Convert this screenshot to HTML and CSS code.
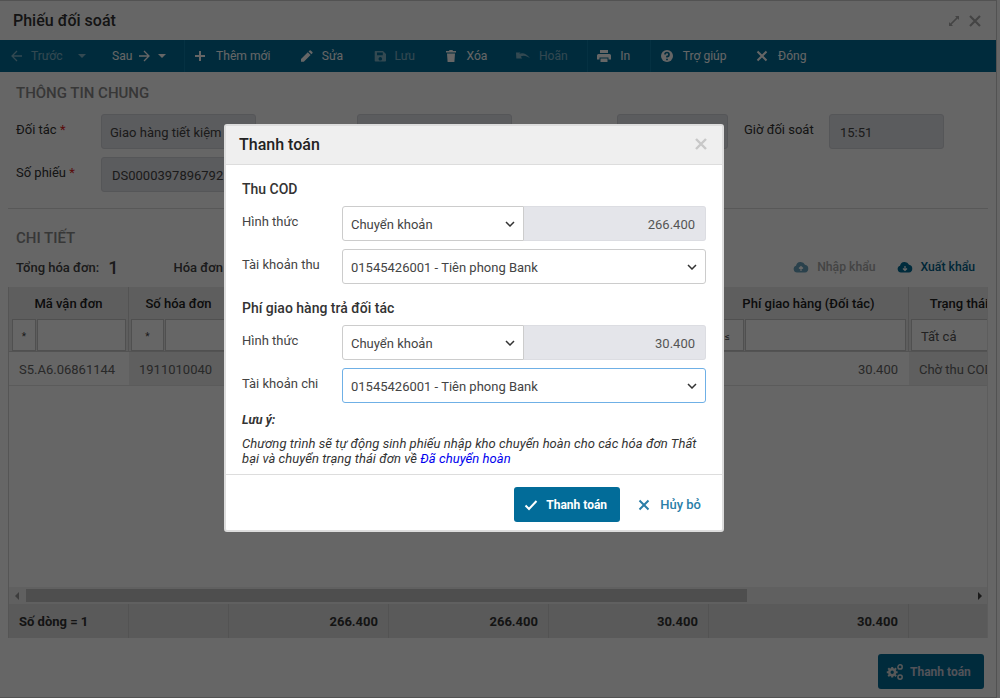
FILE: index.html
```html
<!DOCTYPE html>
<html lang="vi">
<head>
<meta charset="utf-8">
<title>Phiếu đối soát</title>
<link rel="stylesheet" href="styles.css">
</head>
<body>
<div class="app">
  <header class="titlebar">
    <h1>Phiếu đối soát</h1>
    <div class="win-actions">
      <svg class="win-icon" viewBox="0 0 12 12"><path d="M7 1h4v4L9.600 3.600 3.600 9.600 5 11H1V7l1.400 1.400 6-6z"/></svg>
      <svg class="win-icon" viewBox="0 0 12 12"><path class="x-stroke" d="M1 1l10 10M11 1L1 11"/></svg>
    </div>
  </header>

  <nav class="toolbar">
    <div class="tool-nav">
      <span class="nav-prev dim">
        <svg class="ic" viewBox="0 0 14 14"><path class="st" d="M12 7H2.500M7 2L2 7l5 5"/></svg>
        <span class="nav-text">Trước</span>
        <i class="caret"></i>
      </span>
      <span class="nav-next">
        <span>Sau</span>
        <svg class="ic" viewBox="0 0 14 14"><path class="st" d="M2 7h9.500M7 2l5 5-5 5"/></svg>
        <i class="caret"></i>
      </span>
    </div>
    <span class="tool first"><svg class="ic" viewBox="0 0 14 14"><path class="st st2" d="M7 2v10M2 7h10"/></svg>Thêm mới</span>
    <span class="tool"><svg class="ic" viewBox="0 0 14 14"><path class="fl" d="M2 10l6.800-6.800 2.800 2.800L4.800 12.800H2zM9.600 2.400l1-1a.8.8 0 0 1 1.100 0l1.700 1.700a.8.8 0 0 1 0 1.100l-1 1z"/></svg>Sửa</span>
    <span class="tool dim"><svg class="ic" viewBox="0 0 14 14"><path class="fl" d="M3.500 2h7.500L14 5v6.800a.8.8 0 0 1-.8.8H3.500a.8.8 0 0 1-.8-.8V2.800a.8.8 0 0 1 .8-.8zM5 3.500v2.800h5.800V3.500zM8.300 8a1.800 1.800 0 1 0 .01 0z" fill-rule="evenodd"/></svg>Lưu</span>
    <span class="tool"><svg class="ic" viewBox="0 0 14 14"><path class="fl" d="M5.500 1h3l.5 1h3v1.500H2V2h3zM3 4.500h8L10.400 13H3.600z"/></svg>Xóa</span>
    <span class="tool dim sep-after"><svg class="ic" viewBox="0 0 14 14"><path class="fl" d="M0 3.500l4.500 0-1.400 1.500c3-1.600 7.400-.8 10.900 4.200-3.300-2.600-6.800-3.200-9.300-1.600L6.200 9.500H0.300z"/></svg>Hoãn</span>
    <span class="tool sep-after"><svg class="ic" viewBox="0 0 14 14"><path class="fl" d="M3 1h8v3H3zM1.500 5h11A1.500 1.500 0 0 1 14 6.500V10.500h-2.500V8.500h-9v2H0V6.500A1.500 1.500 0 0 1 1.500 5zM3.500 9.500h7V13h-7z"/></svg>In</span>
    <span class="tool"><svg class="ic" viewBox="0 0 14 14"><circle class="fl" cx="7" cy="7" r="6"/><path class="q" d="M5 5.500A2 2 0 1 1 7 7.500V8.500M7 9.800v1.400"/></svg>Trợ giúp</span>
    <span class="tool"><svg class="ic" viewBox="0 0 14 14"><path class="st st2" d="M2.500 2.500l9 9M11.500 2.500l-9 9"/></svg>Đóng</span>
  </nav>

  <main class="content">
    <h2 class="section">THÔNG TIN CHUNG</h2>
    <div class="form-row">
      <label class="lbl">Đối tác <b class="req">*</b></label>
      <div class="field w-partner">Giao hàng tiết kiệm</div>
      <div class="field w-mid"></div>
      <label class="lbl lbl-date">Ngày</label>
      <div class="field w-date"></div>
      <label class="lbl lbl-time">Giờ đối soát</label>
      <div class="field w-time">15:51</div>
    </div>
    <div class="form-row">
      <label class="lbl">Số phiếu <b class="req">*</b></label>
      <div class="field w-code">DS0000397896792</div>
    </div>
    <hr class="divider">

    <h2 class="section">CHI TIẾT</h2>
    <div class="summary">
      <span class="sum-label">Tổng hóa đơn:</span>
      <span class="sum-num">1</span>
      <span class="sum-label sum-second">Hóa đơn</span>
      <span class="sum-actions">
        <span class="act act-dim"><svg class="cloud" viewBox="0 0 16 12"><path class="cl" d="M4 11.500A3.500 3.500 0 0 1 3 4.700 4.800 4.800 0 0 1 12 3.800a3.900 3.900 0 0 1 0 7.700z"/><path class="ar" d="M8 10V6M6 7.500L8 5.500l2 2"/></svg>Nhập khẩu</span>
        <span class="act"><svg class="cloud" viewBox="0 0 16 12"><path class="cl" d="M4 11.500A3.500 3.500 0 0 1 3 4.700 4.800 4.800 0 0 1 12 3.800a3.900 3.900 0 0 1 0 7.700z"/><path class="ar" d="M8 5v4M6 7.500l2 2 2-2"/></svg>Xuất khẩu</span>
      </span>
    </div>

    <div class="grid">
      <div class="row head">
        <div class="cell">Mã vận đơn</div>
        <div class="cell">Số hóa đơn</div>
        <div class="cell"></div>
        <div class="cell"></div>
        <div class="cell"></div>
        <div class="cell">Phí giao hàng (Đối tác)</div>
        <div class="cell">Trạng thái</div>
      </div>
      <div class="row filter">
        <div class="cell"><span class="op op-a">*</span><span class="inp"></span></div>
        <div class="cell"><span class="op">*</span><span class="inp"></span></div>
        <div class="cell"></div>
        <div class="cell"></div>
        <div class="cell"></div>
        <div class="cell"><span class="op">≤</span><span class="inp"></span></div>
        <div class="cell"><span class="inp inp-text">Tất cả</span></div>
      </div>
      <div class="row data">
        <div class="cell">S5.A6.06861144</div>
        <div class="cell shade">1911010040</div>
        <div class="cell"></div>
        <div class="cell"></div>
        <div class="cell"></div>
        <div class="cell num">30.400</div>
        <div class="cell shade">Chờ thu COD</div>
      </div>
      <div class="grid-empty"></div>
      <div class="scrollbar">
        <i class="arrow-l"></i>
        <div class="thumb"></div>
        <i class="arrow-r"></i>
      </div>
      <div class="row foot">
        <div class="cell">Số dòng = 1</div>
        <div class="cell"></div>
        <div class="cell num">266.400</div>
        <div class="cell num">266.400</div>
        <div class="cell num">30.400</div>
        <div class="cell num">30.400</div>
        <div class="cell"></div>
      </div>
    </div>

    <div class="page-actions">
      <span class="btn-pay-bg">
        <svg class="cogs" viewBox="0 0 16 16"><path class="cog" d="M5.500 3.600v1.800M5.500 11v1.800M2.500 8.200H.7M10.300 8.200H8.500M3.200 5.900L2 4.700M9 11.700l-1.200-1.200M3.200 10.500L2 11.700M9 4.700L7.800 5.900"/><circle class="cog-r" cx="5.500" cy="8.200" r="2.600"/><circle class="cog-t" cx="12.500" cy="3.500" r="1.900"/><circle class="cog-t" cx="12.500" cy="12.500" r="1.900"/></svg>
        Thanh toán
      </span>
    </div>
  </main>
</div>

<div class="overlay">
  <section class="modal">
    <header class="modal-head">
      <h3>Thanh toán</h3>
      <svg class="modal-x" viewBox="0 0 12 12"><path d="M1 1l10 10M11 1L1 11"/></svg>
    </header>
    <div class="modal-body">
      <h4 class="m-title">Thu COD</h4>
      <div class="m-row">
        <span class="m-label">Hình thức</span>
        <div class="m-control">
          <div class="sel sel-half">Chuyển khoản<svg class="chev" viewBox="0 0 10 6"><path d="M1 1l4 4 4-4"/></svg></div>
          <div class="addon">266.400</div>
        </div>
      </div>
      <div class="m-row">
        <span class="m-label">Tài khoản thu</span>
        <div class="m-control">
          <div class="sel">01545426001 - Tiên phong Bank<svg class="chev" viewBox="0 0 10 6"><path d="M1 1l4 4 4-4"/></svg></div>
        </div>
      </div>
      <h4 class="m-title m-title-2">Phí giao hàng trả đối tác</h4>
      <div class="m-row">
        <span class="m-label">Hình thức</span>
        <div class="m-control">
          <div class="sel sel-half">Chuyển khoản<svg class="chev" viewBox="0 0 10 6"><path d="M1 1l4 4 4-4"/></svg></div>
          <div class="addon">30.400</div>
        </div>
      </div>
      <div class="m-row">
        <span class="m-label">Tài khoản chi</span>
        <div class="m-control">
          <div class="sel sel-focus">01545426001 - Tiên phong Bank<svg class="chev" viewBox="0 0 10 6"><path d="M1 1l4 4 4-4"/></svg></div>
        </div>
      </div>
      <p class="note-title">Lưu ý:</p>
      <p class="note">Chương trình sẽ tự động sinh phiếu nhập kho chuyển hoàn cho các hóa đơn Thất bại và chuyển trạng thái đơn về <span class="note-link">Đã chuyển hoàn</span></p>
    </div>
    <footer class="modal-foot">
      <button class="btn-primary" type="button"><svg class="btn-ic" viewBox="0 0 14 12"><path d="M1.500 6.500l3.500 3.500 7.500-8"/></svg>Thanh toán</button>
      <button class="btn-link" type="button"><svg class="btn-ic" viewBox="0 0 12 12"><path d="M1.500 1.500l9 9M10.500 1.500l-9 9"/></svg>Hủy bỏ</button>
    </footer>
  </section>
</div>
</body>
</html>
```

FILE: styles.css
```css
* { box-sizing: border-box; }
html, body { margin: 0; height: 100%; overflow: hidden; background: #fff; }
body { font-family: Roboto, "Noto Sans", sans-serif; font-size: 13px; color: #333; }

.app { width: 997px; height: 698px; border-top: 1px solid #ccc; border-right: 1px solid #ccc; border-bottom: 1px solid #ccc; overflow: hidden; background: #fff; }

.titlebar { height: 39px; display: flex; align-items: center; justify-content: space-between; padding: 0 15px 0 13px; }
.titlebar h1 { margin: 0; font-size: 16px; font-weight: 500; color: #333; }
.win-actions { display: flex; align-items: center; gap: 9px; }
.win-icon { width: 12px; height: 12px; fill: #aaa; }
.x-stroke { fill: none; stroke: #aaa; stroke-width: 2.200; }

.toolbar { height: 32px; background: #006c97; display: flex; align-items: center; color: #fff; font-size: 12.100px; padding-left: 10px; }
.tool-nav { display: flex; align-items: center; height: 100%; width: 175px; border-right: 1px solid #0d7ba6; flex: none; }
.nav-prev { display: flex; align-items: center; width: 102px; }
.nav-next { display: flex; align-items: center; }
.nav-text { margin: 0 15px 0 7px; }
.nav-next .ic { margin: 0 7px 0 5px; }
.caret { width: 0; height: 0; border-left: 4px solid transparent; border-right: 4px solid transparent; border-top: 4px solid currentColor; }
.dim { opacity: .5; }
.ic { width: 14px; height: 14px; flex: none; }
.st { fill: none; stroke: #fff; stroke-width: 1.300; }
.st2 { stroke-width: 2; }
.fl { fill: #fff; }
.q { fill: none; stroke: #006c97; stroke-width: 1.700; }
.tool { display: flex; align-items: center; gap: 9px; padding: 0 19.500px 0 9px; height: 100%; }
.first { padding-left: 8px; }
.sep-after { border-right: 1px solid #0d7ba6; }
.sep-after.dim { opacity: 1; color: rgba(255,255,255,.5); }
.sep-after.dim .ic { opacity: .5; }

.content { padding: 0 8px; }
.section { margin: 0; padding-left: 8px; height: 20px; line-height: 20px; font-size: 15px; font-weight: 500; color: #8a8a8a; }
.content > .section:first-child { margin-top: 11px; }

.form-row { display: flex; padding-left: 8px; margin-bottom: 8px; height: 35px; }
.content > .section:first-child + .form-row { margin-top: 11px; }
.lbl { width: 85px; flex: none; font-size: 13px; line-height: 31px; color: #333; }
.req { color: #e02020; font-weight: 400; }
.field { height: 35px; background: #e4e5ea; border: 1px solid #d5d6dc; border-radius: 3px; padding: 0 8px; line-height: 36px; font-size: 13px; color: #444; white-space: nowrap; overflow: hidden; flex: none; }
.w-partner { width: 155px; }
.w-mid { width: 155px; margin-left: 101px; }
.lbl-date { width: 105px; padding-left: 46px; }
.w-date { width: 111px; }
.lbl-time { width: 101px; padding-left: 16px; }
.w-time { width: 115px; padding-left: 10px; }
.w-code { width: 155px; padding-left: 10px; }
.divider { margin: 16px 0 19px; border: 0; border-top: 1px solid #ddd; }

.summary { display: flex; align-items: center; height: 20px; margin: 9px 0 10px; padding-left: 8px; }
.sum-label { font-size: 13px; font-weight: 500; color: #444; }
.sum-num { font-size: 18px; font-weight: 500; margin-left: 9px; color: #444; }
.sum-second { margin-left: 55px; }
.sum-actions { margin-left: auto; display: flex; gap: 21px; font-size: 12.200px; font-weight: 500; padding-right: 13px; }
.act { display: flex; align-items: center; gap: 8px; color: #00618a; }
.act-dim { color: #aaa; }
.cloud { width: 16px; height: 12px; }
.cl { fill: #006c97; }
.act-dim .cl { fill: #6aa4bd; }
.ar { fill: none; stroke: #fff; stroke-width: 1.200; }

.grid { height: 351px; width: 980px; display: flex; flex-direction: column; border-left: 1px solid #d5d5d5; border-right: 1px solid #e8e8e8; font-size: 13px; overflow: hidden; }
.row { display: grid; grid-template-columns: 120px 100px 160px 160px 160px 200px 100px; flex: none; white-space: nowrap; }
.cell { border-right: 1px solid #d0d0d0; min-width: 0; overflow: hidden; }
.cell:last-child { border-right: 0; }
.head { height: 32px; background: #ebebeb; font-weight: 500; color: #222; }
.head .cell { text-align: center; line-height: 34px; }
.filter { height: 33px; background: #ebebeb; border-bottom: 1px solid #d0d0d0; }
.filter .cell { display: flex; padding: 0 2px; }
.filter .cell:first-child { padding-left: 3px; }
.op { width: 33px; flex: none; background: #fff; border: 1px solid #c8c8c8; text-align: center; line-height: 34px; color: #444; font-size: 10px; }
.op-a { width: 24px; }
.inp { flex: 1; min-width: 0; background: #fff; border: 1px solid #c8c8c8; margin-left: 1px; }
.inp-text { padding-left: 9px; line-height: 34px; color: #555; margin-left: 0; }
.data { height: 34px; line-height: 35px; border-bottom: 1px solid #e3e3e3; color: #666; }
.data .cell { padding: 0 10px; border-right-color: transparent; }
.shade { background: #ededed; }
.num { text-align: right; }
.grid-empty { flex: 1; }
.scrollbar { height: 17px; background: #efefef; display: flex; align-items: center; flex: none; padding: 2px 0; }
.thumb { height: 13px; margin-left: 7px; width: 721px; background: #c4c4c4; }
.arrow-l { margin-left: 6px; width: 0; height: 0; border-top: 4px solid transparent; border-bottom: 4px solid transparent; border-right: 4px solid #999; }
.arrow-r { margin-left: auto; margin-right: 5px; width: 0; height: 0; border-top: 4px solid transparent; border-bottom: 4px solid transparent; border-left: 4px solid #444; }
.foot { height: 34px; background: #e0e0e0; line-height: 35px; font-weight: 700; color: #333; }
.foot .cell { padding: 0 10px; }

.page-actions { display: flex; justify-content: flex-end; margin-top: 16px; padding-right: 4px; }
.btn-pay-bg { width: 106px; height: 35px; display: flex; align-items: center; gap: 6px; padding-left: 8px; background: #006c97; border-radius: 3px; color: #ccd; font-size: 12px; font-weight: 700; }
.cogs { width: 18px; height: 18px; flex: none; fill: none; }
.cog { stroke: #ddd; stroke-width: 1.800; }
.cog-r { stroke: #ddd; stroke-width: 2.200; }
.cog-t { stroke: #ddd; stroke-width: 1.300; }

.overlay { position: fixed; inset: 0; background: rgba(0,0,0,.6); display: flex; justify-content: center; align-items: flex-start; padding: 124px 52px 0 0; }
.modal { width: 500px; height: 408px; background: #fff; border: 2px solid #ddd; border-radius: 3px; display: flex; flex-direction: column; }
.modal-head { height: 39px; flex: none; background: #efefef; border-bottom: 1px solid #ddd; display: flex; align-items: center; justify-content: space-between; padding: 0 15px 2px 13px; }
.modal-head h3 { margin: 0; font-size: 16px; font-weight: 500; color: #222; }
.modal-x { width: 12px; height: 12px; fill: none; stroke: #c8c8c8; stroke-width: 2.400; }
.modal-body { padding: 14px 16px 0; flex: 1; }
.m-title { margin: 0 0 7px; font-size: 14px; line-height: 20px; font-weight: 500; color: #333; }
.m-title-2 { margin-top: 14px; }
.m-row { display: flex; height: 35px; margin-bottom: 8px; }
.m-row:has(+ .m-title-2) { margin-bottom: 0; }
.m-label { width: 100px; flex: none; font-size: 13px; line-height: 18px; padding-top: 7px; color: #444; }
.m-control { flex: 1; display: flex; min-width: 0; }
.sel { flex: 1; height: 35px; border: 1px solid #ccc; border-radius: 3px; background: #fff; padding: 1px 8px 0; display: flex; align-items: center; justify-content: space-between; font-size: 13px; color: #444; }
.sel-half { flex: none; width: 182px; border-radius: 3px 0 0 3px; }
.sel-focus { border-color: #6fb0e6; }
.chev { width: 10px; height: 6px; fill: none; stroke: #333; stroke-width: 1.500; }
.addon { flex: 1; height: 35px; background: #e4e5ea; border: 1px solid #dcdde2; border-left: 0; border-radius: 0 3px 3px 0; text-align: right; padding-right: 10px; line-height: 35px; color: #555; font-size: 13px; }
.note-title { margin: 9px 0 8px; font-size: 12.500px; line-height: 16px; font-style: italic; font-weight: 700; color: #333; }
.note { margin: 0; font-size: 13px; line-height: 15px; font-style: italic; color: #333; letter-spacing: .05px; }
.note-link { color: #0000ee; }
.modal-foot { height: 56px; flex: none; border-top: 1px solid #ddd; display: flex; align-items: flex-start; justify-content: flex-end; padding: 12px 21px 0 0; gap: 17px; }
.btn-primary { width: 106px; height: 35px; display: flex; align-items: center; gap: 8px; padding: 0 0 0 10px; background: #026c99; border: 0; border-radius: 3px; color: #fff; font: 700 12px Roboto, sans-serif; }
.btn-ic { width: 14px; height: 12px; fill: none; stroke: currentColor; stroke-width: 2; flex: none; }
.btn-link { display: flex; align-items: center; gap: 9px; height: 35px; padding: 0; background: none; border: 0; color: #2a7ea8; font: 500 13px Roboto, sans-serif; }
```
